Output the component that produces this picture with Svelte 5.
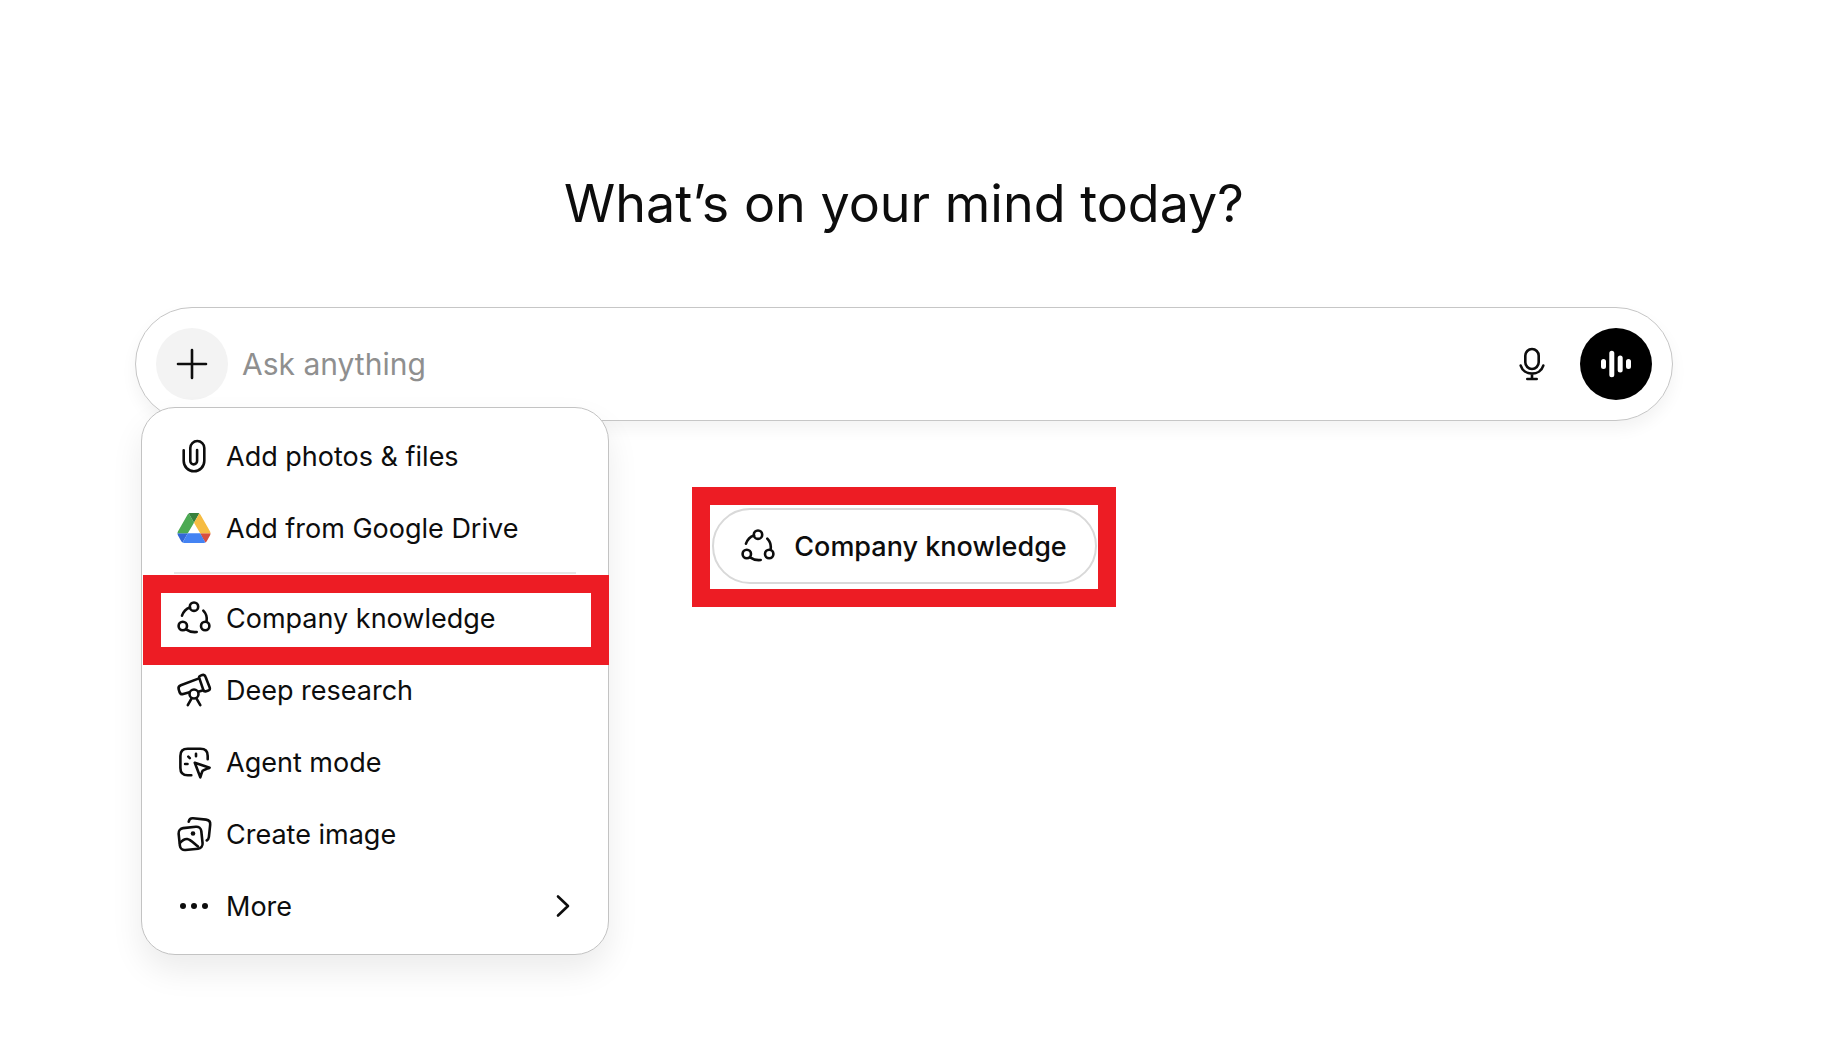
<script>
  let prompt = $state('');

  const fileItems = [
    { id: 'clip', label: 'Add photos & files' },
    { id: 'drive', label: 'Add from Google Drive' }
  ];

  const toolItems = [
    { id: 'knowledge', label: 'Company knowledge', highlighted: true },
    { id: 'research', label: 'Deep research' },
    { id: 'agent', label: 'Agent mode' },
    { id: 'image', label: 'Create image' },
    { id: 'more', label: 'More', submenu: true }
  ];
</script>

{#snippet icon(id)}
  <svg class="icon" viewBox="0 0 40 40" aria-hidden="true">
    {#if id === 'clip'}
      <path d="M9.7 14.3V25a10.3 10.3 0 0 0 20.6 0V12a7 7 0 0 0-14 0v13a3.4 3.4 0 0 0 6.8 0V14" />
    {:else if id === 'drive'}
      <svg class="drive" x="3.3" y="5" width="33.4" height="30" viewBox="0 0 87.3 78">
        <path d="m6.6 66.85 3.85 6.65c.8 1.4 1.95 2.5 3.3 3.3l13.75-23.8h-27.5c0 1.55.4 3.1 1.2 4.5z" fill="#3367d6" />
        <path d="m43.65 25-13.75-23.8c-1.35.8-2.5 1.9-3.3 3.3l-25.4 44a9.06 9.06 0 0 0-1.2 4.5h27.5z" fill="#4caa53" />
        <path d="m73.55 76.8c1.35-.8 2.5-1.9 3.3-3.3l1.6-2.75 7.65-13.25c.8-1.4 1.2-2.95 1.2-4.5h-27.5l5.85 11.5z" fill="#d84f3f" />
        <path d="m43.65 25 13.75-23.8c-1.35-.8-2.9-1.2-4.5-1.2h-18.5c-1.6 0-3.15.45-4.5 1.2z" fill="#38803c" />
        <path d="m59.8 53h-32.3l-13.75 23.8c1.35.8 2.9 1.2 4.5 1.2h50.8c1.6 0 3.15-.45 4.5-1.2z" fill="#4483f3" />
        <path d="m73.4 26.5-12.7-22c-.8-1.4-1.95-2.5-3.3-3.3l-13.75 23.8 16.15 28h27.45c0-1.55-.4-3.1-1.2-4.5z" fill="#f6bc42" />
      </svg>
    {:else if id === 'knowledge'}
      <circle cx="20" cy="8.7" r="4.2" />
      <circle cx="8.8" cy="28" r="4.2" />
      <circle cx="31.2" cy="28" r="4.2" />
      <path d="M8 17.7c1.4-4.2 4.2-7 8-8.2M29.3 12.7c2.9 2.9 4 6.6 3.3 10.9M12 31.3c3.4 2.3 6.8 3.2 10.7 2.7" />
    {:else if id === 'research'}
      <path d="M25.3 8.2c-.4-1.3.2-2.2 1.3-2.6l1.7-.6c1.5-.5 2.6.1 3.1 1.5l4.3 11c.5 1.5 0 2.6-1.3 3l-2.2.7c-1.4.4-2.5 0-2.9-1.4z" />
      <path d="M25 8.4 6.8 15.3c-1.8.7-2.6 2.3-2.1 4l.8 2.7c.6 1.8 2 2.5 3.7 2l6.3-1.7M24.3 21.8l5-1.5" />
      <circle cx="20" cy="24" r="4.5" />
      <path d="M17.6 28.3 13.8 35.2M22.4 28.3l3.9 6.9" />
    {:else if id === 'agent'}
      <path d="M33.7 17.3V14c0-5-2.3-7.3-7.3-7.3H13.7c-5 0-7.3 2.3-7.3 7.3v12c0 5 2.3 7.3 7.3 7.3h3.6" />
      <path d="m20.8 20.7 14.8 5c-3.2 1.3-5.5 2-7 3.1-1 1.8-1.3 3.8-2.3 6.5z" />
      <path d="M22 11.8v2.4M14.3 14.6l1.5 1.5M11.1 22h2.4" />
    {:else if id === 'image'}
      <rect x="5.2" y="13.4" width="22.8" height="22" rx="5" transform="rotate(-6 16.6 24.4)" />
      <path d="M14.7 7.7c.5-2.5 1.7-3.6 4.3-3.4l13 1.3c3.2.4 4.5 2 4.2 5l-1.3 12.2c-.2 1.9-.9 3-2.2 3.7M6 29c2.3-2.7 4.6-4.3 7.2-4 3.2.3 6 3.7 10.8 7.5" />
      <circle class="dot" cx="19" cy="19.5" r="2.3" />
    {:else if id === 'more'}
      <circle class="dot" cx="9" cy="20" r="3" />
      <circle class="dot" cx="20" cy="20" r="3" />
      <circle class="dot" cx="31" cy="20" r="3" />
    {:else if id === 'plus'}
      <path d="M20 6v28M6 20h28" />
    {:else if id === 'mic'}
      <rect x="13.3" y="5" width="13.4" height="20" rx="6.7" />
      <path d="M8.7 21.6c1.5 4.8 6 8 11.3 8s9.8-3.2 11.3-8M20 29.6V35M15.3 35h9.4" />
    {:else if id === 'voice'}
      <path class="bars" d="M7.5 17.5v5M15.8 9.2v21.6M24.2 14v12M32.5 17.5v5" />
    {:else if id === 'chevron'}
      <path d="m15 10.5 10 9.5-10 9.5" />
    {/if}
  </svg>
{/snippet}

{#snippet menuItem(item)}
  <button type="button" role="menuitem" class="menu-item" class:highlighted={item.highlighted}>
    {@render icon(item.id)}
    <span class="menu-label">{item.label}</span>
    {#if item.submenu}
      {@render icon('chevron')}
    {/if}
  </button>
{/snippet}

<main>
  <h1>What’s on your mind today?</h1>

  <div class="composer-area">
    <form class="composer" onsubmit={(e) => e.preventDefault()}>
      <button type="button" class="round-btn add-btn" aria-label="Add files and more">
        {@render icon('plus')}
      </button>
      <input type="text" placeholder="Ask anything" aria-label="Ask anything" bind:value={prompt} />
      <button type="button" class="round-btn" aria-label="Dictate">
        {@render icon('mic')}
      </button>
      <button type="button" class="round-btn voice-btn" aria-label="Use voice mode">
        {@render icon('voice')}
      </button>
    </form>

    <div class="menu" role="menu">
      {#each fileItems as item (item.id)}
        {@render menuItem(item)}
      {/each}
      <hr />
      {#each toolItems as item (item.id)}
        {@render menuItem(item)}
      {/each}
    </div>
  </div>

  <div class="suggestions">
    <div class="callout">
      <button type="button" class="pill">
        {@render icon('knowledge')}
        Company knowledge
      </button>
    </div>
  </div>
</main>

<style>
  :global(body) {
    margin: 0;
    background: #fff;
  }

  main {
    box-sizing: border-box;
    min-height: 100vh;
    padding: 168px 169px 0 135px;
    font-family: Inter, "Liberation Sans", sans-serif;
    font-size: 27px;
    color: #0d0d0d;
  }

  h1 {
    margin: 0 0 67px;
    font-size: 52px;
    font-weight: 400;
    line-height: 72px;
    text-align: center;
  }

  button {
    padding: 0;
    border: none;
    background: none;
    font: inherit;
    color: inherit;
    cursor: pointer;
  }

  .icon {
    display: block;
    flex: none;
    width: 40px;
    height: 40px;
    fill: none;
    stroke: currentColor;
    stroke-width: 2.6;
    stroke-linecap: round;
    stroke-linejoin: round;
  }

  .dot {
    fill: currentColor;
    stroke: none;
  }

  .drive {
    stroke: none;
  }

  .bars {
    stroke-width: 5;
  }

  /* Composer */
  .composer-area {
    position: relative;
  }

  .composer {
    display: flex;
    align-items: center;
    gap: 12px;
    padding: 20px;
    border: 1px solid #c6c6c6;
    border-radius: 57px;
    background: #fff;
    box-shadow: 0 8px 16px rgba(0, 0, 0, 0.05);
  }

  .composer input {
    flex: 1;
    min-width: 0;
    padding: 0 2px;
    border: none;
    outline: none;
    background: none;
    font: inherit;
    font-size: 30px;
    color: inherit;
  }

  .composer input::placeholder {
    color: #8f8f8f;
    opacity: 1;
  }

  .round-btn {
    display: grid;
    place-items: center;
    flex: none;
    width: 72px;
    height: 72px;
    border-radius: 50%;
  }

  .add-btn {
    background: #f3f3f3;
  }

  .voice-btn {
    background: #000;
    color: #fff;
  }

  /* Menu */
  .menu {
    position: absolute;
    top: 100px;
    left: 6px;
    box-sizing: border-box;
    width: 468px;
    padding: 12px 0;
    border: 1px solid #c3c3c3;
    border-radius: 34px;
    background: #fff;
    box-shadow: 0 16px 32px rgba(0, 0, 0, 0.08);
  }

  .menu-item {
    position: relative;
    display: flex;
    align-items: center;
    gap: 12px;
    width: 100%;
    height: 72px;
    padding: 0 25px 0 32px;
    text-align: left;
  }

  .menu-label {
    flex: 1;
  }

  .menu-item.highlighted::after {
    content: "";
    position: absolute;
    inset: -7px -1px -11px 1px;
    border: 18px solid #ed1c24;
  }

  hr {
    height: 2px;
    margin: 8px 32px;
    border: none;
    background: #e6e6e6;
  }

  /* Suggestion pill */
  .suggestions {
    display: flex;
    justify-content: center;
    margin-top: 66px;
  }

  .callout {
    padding: 3px 1px 5px 2px;
    border: 18px solid #ed1c24;
  }

  .pill {
    display: flex;
    align-items: center;
    gap: 16px;
    height: 76px;
    padding: 0 28px 0 24px;
    border: 2px solid #d9d9d9;
    border-radius: 38px;
    font-weight: 500;
  }
</style>
